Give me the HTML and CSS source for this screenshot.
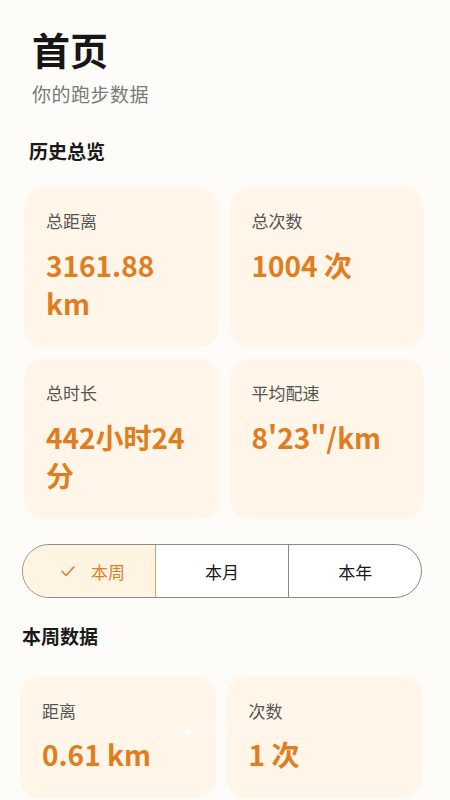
FILE: index.html
```html
<!DOCTYPE html>
<html lang="zh-CN">
<head>
<meta charset="utf-8">
<title>首页</title>
<link rel="stylesheet" href="styles.css">
</head>
<body>
<main class="page">
  <header class="head">
    <h1 class="title">首页</h1>
    <p class="subtitle">你的跑步数据</p>
  </header>

  <h2 class="section">历史总览</h2>
  <div class="grid">
    <div class="card"><div class="label">总距离</div><div class="value">3161.88 km</div></div>
    <div class="card"><div class="label">总次数</div><div class="value">1004 次</div></div>
    <div class="card"><div class="label">总时长</div><div class="value">442小时24分</div></div>
    <div class="card"><div class="label">平均配速</div><div class="value">8'23"/km</div></div>
  </div>

  <div class="segment">
    <div class="seg seg-active">
      <svg class="check" viewBox="0 0 20 20" width="18" height="18"><path d="M3.5 10.5 L8 15 L16.5 5.5" fill="none" stroke="currentColor" stroke-width="1.8" stroke-linecap="round" stroke-linejoin="round"/></svg>
      <span>本周</span>
    </div>
    <div class="seg">本月</div>
    <div class="seg">本年</div>
  </div>

  <h2 class="section section-week">本周数据</h2>
  <div class="grid grid-week">
    <div class="card card-short"><div class="label">距离</div><div class="value">0.61 km</div></div>
    <div class="card card-short"><div class="label">次数</div><div class="value">1 次</div></div>
    <div class="dots"><span class="dot dot-on"></span><span class="dot"></span><span class="dot"></span><span class="dot"></span><span class="dot"></span></div>
  </div>
</main>
</body>
</html>
```

FILE: styles.css
```css
* { box-sizing: border-box; }
html, body {
  margin: 0;
  padding: 0;
  background: #fdfcf8;
}
body {
  font-family: "Noto Sans CJK SC", "Noto Sans", sans-serif;
  color: #1a1a1a;
  width: 450px;
  height: 800px;
  overflow: hidden;
}
.page {
  padding: 23px 26px 0 24px;
}
.head {
  padding-left: 8px;
}
.title {
  margin: 0;
  font-size: 38px;
  line-height: 52px;
  font-weight: 700;
  color: #161616;
}
.subtitle {
  margin: 5px 0 0;
  font-size: 19px;
  line-height: 28px;
  color: #7a7a7a;
  letter-spacing: 0.5px;
}
.section {
  margin: 29px 0 0 5px;
  font-size: 19px;
  line-height: 28px;
  font-weight: 700;
  color: #1a1a1a;
}
.grid {
  display: grid;
  grid-template-columns: 1fr 1fr;
  gap: 12px 11px;
  margin-top: 22px;
  position: relative;
}
.card {
  background: #fff5e8;
  border-radius: 20px;
  height: 160px;
  padding: 21px 20px 0 22px;
}
.label {
  font-size: 17px;
  line-height: 25px;
  color: #555;
}
.value {
  margin-top: 13px;
  font-size: 28px;
  line-height: 38px;
  font-weight: 600;
  color: #e07d1f;
}
.segment {
  display: grid;
  grid-template-columns: 1fr 1fr 1fr;
  margin-top: 25px;
  margin-right: 2px;
  margin-left: -2px;
  height: 54px;
  border: 1.5px solid #8a8a8a;
  border-radius: 27px;
  overflow: hidden;
  background: #fff;
}
.seg {
  display: flex;
  align-items: center;
  justify-content: center;
  gap: 14px;
  font-size: 17px;
  color: #1a1a1a;
  border-left: 1.5px solid #8a8a8a;
}
.seg:first-child { border-left: none; }
.seg-active {
  background: #fff3e2;
  color: #d9822b;
  border: 1.5px solid #e3a05c;
  border-radius: 27px 0 0 27px;
  margin: -1.5px 0 -1.5px -1.5px;
  padding-left: 8px;
}
.seg-active + .seg { border-left: none; }
.check { color: #d9822b; }
.section-week {
  margin: 24px 0 0 -2px;
}
.grid-week {
  margin-top: 26px;
  margin-left: -4px;
  margin-right: 2px;
}
.card-short {
  height: 122px;
  padding-top: 22px;
}
.card-short .value { margin-top: 12px; }
.dots {
  position: absolute;
  left: 164px;
  top: 53px;
  display: flex;
  gap: 10px;
}
.dot {
  width: 7px;
  height: 7px;
  border-radius: 50%;
  background: rgba(255,255,255,0.35);
}
.dot-on { background: #ffffff; }
```
